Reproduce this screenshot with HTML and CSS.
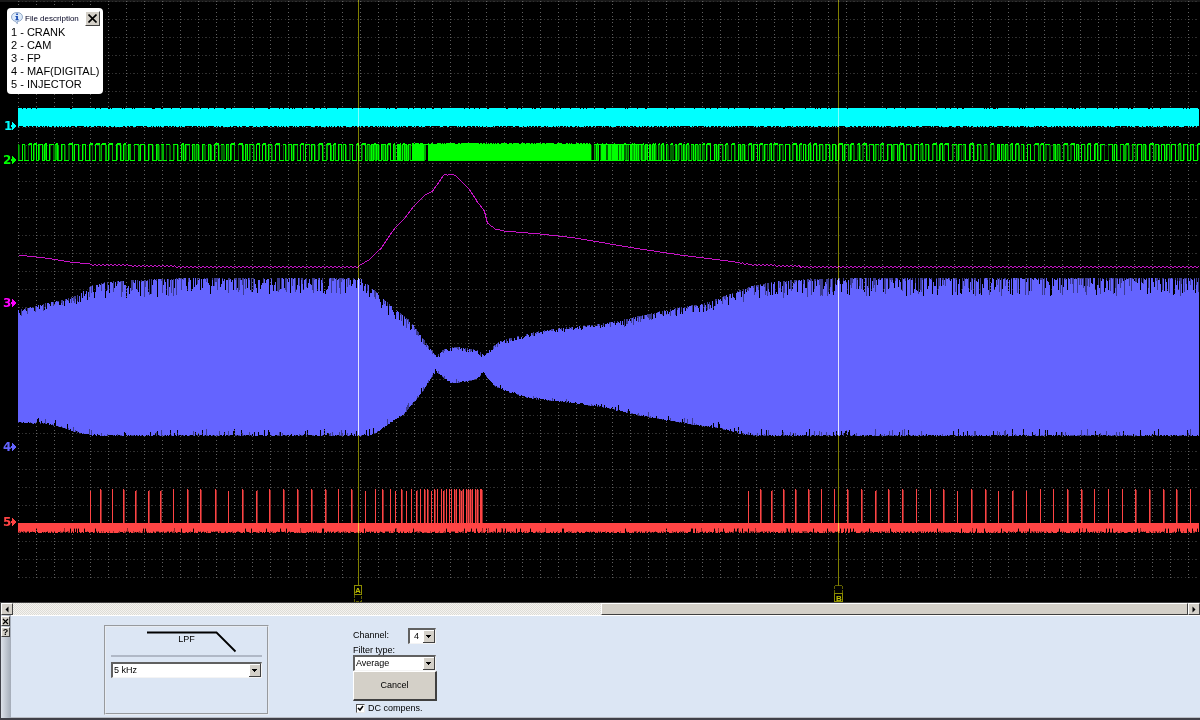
FILE: index.html
```html
<!DOCTYPE html>
<html lang="en">
<head>
<meta charset="utf-8">
<title>Oscilloscope</title>
<link rel="stylesheet" href="styles.css">
</head>
<body>
<main class="scope">
  <svg class="plot" viewBox="0 0 1200 602" preserveAspectRatio="none" role="img" aria-label="Recorded signals">
    <defs>
      <pattern id="grid" x="18" y="1" width="18" height="18" patternUnits="userSpaceOnUse">
        <path class="dots-h" d="M0 0h2v1H0zM4 0h1v1H4zM7 0h2v1H7zM11 0h1v1h-1zM15 0h1v1h-1z"/>
        <path class="dots-v" d="M0 0h1v1H0zM0 3h1v1H0zM0 7h1v1H0zM0 11h1v1H0zM0 15h1v1H0z"/>
      </pattern>
    </defs>
    <rect class="top-edge" x="0" y="0" width="1200" height="2"/>
    <rect x="18" y="1" width="1181" height="577" fill="url(#grid)"/>
    <g id="traces"></g>
    <g class="cursors">
      <rect class="cursor" x="358" y="0" width="1" height="586"/>
      <rect class="cursor" x="838" y="0" width="1" height="586"/>
      <rect class="flag" x="354.5" y="585.5" width="7" height="9" rx="1"/>
      <path class="flag dashed" d="M354.5 595v6.500h7V595"/>
      <rect class="flag" x="834.500" y="593.500" width="8" height="8" rx="1"/>
      <path class="flag dashed" d="M834.500 593v-7.500h8V593"/>
      <text class="flag-text" x="358" y="593">A</text>
      <text class="flag-text" x="839" y="601">B</text>
    </g>
    <g class="channels">
      <g class="ch1"><text x="4" y="130">1</text><path d="M11 125h1v-3h1v1h1v1h1v1h1v2h-1v1h-1v1h-1v1h-1v-3h-1z"/></g>
      <g class="ch2"><text x="3" y="164">2</text><path d="M11 159h1v-3h1v1h1v1h1v1h1v2h-1v1h-1v1h-1v1h-1v-3h-1z"/></g>
      <g class="ch3"><text x="3" y="307">3</text><path d="M11 302h1v-3h1v1h1v1h1v1h1v2h-1v1h-1v1h-1v1h-1v-3h-1z"/></g>
      <g class="ch4"><text x="3" y="451">4</text><path d="M11 446h1v-3h1v1h1v1h1v1h1v2h-1v1h-1v1h-1v1h-1v-3h-1z"/></g>
      <g class="ch5"><text x="3" y="526">5</text><path d="M11 521h1v-3h1v1h1v1h1v1h1v2h-1v1h-1v1h-1v1h-1v-3h-1z"/></g>
    </g>
  </svg>
  <aside class="description">
    <header class="description-head">
      <svg class="info" viewBox="0 0 12 12" aria-hidden="true">
        <path d="M6 .5C2.500.5.500 2.500.500 5c0 2.300 1.700 4 4 4.400L6.300 11.800V9.500C9.500 9.300 11.500 7.500 11.500 5 11.500 2.500 9.500.5 6 .5z" fill="#dceafa" stroke="#7f98bc" stroke-width=".8"/>
        <path d="M5.200 1.500h1.700V3H5.200zM4.500 4h2.400v3.300h.8v1H4.400v-1h.8V5h-.7z" fill="#1648b0"/>
      </svg>
      <span>File description</span>
      <button class="close" type="button" aria-label="Close description"><svg viewBox="0 0 9 9"><path d="M.5.5l8 8M8.500.5l-8 8" stroke="#000" stroke-width="1.600"/></svg></button>
    </header>
    <ul class="channel-list">
      <li>1 - CRANK</li>
      <li>2 - CAM</li>
      <li>3 - FP</li>
      <li>4 - MAF(DIGITAL)</li>
      <li>5 - INJECTOR</li>
    </ul>
  </aside>
</main>
<nav class="scrollbar" aria-label="Timeline">
  <button class="arrow" type="button" aria-label="Scroll left"><svg viewBox="0 0 6 7"><path d="M4.500.5v6l-3-3z"/></svg></button>
  <div class="track"><div class="thumb"></div></div>
  <button class="arrow" type="button" aria-label="Scroll right"><svg viewBox="0 0 6 7"><path d="M1.500.5v6l3-3z"/></svg></button>
</nav>
<form class="panel">
  <div class="grip">
    <button class="mini" type="button" aria-label="Close panel"><svg viewBox="0 0 7 7"><path d="M1 1l5 5M6 1L1 6" stroke="#000" stroke-width="1.200"/></svg></button>
    <button class="mini" type="button">?</button>
  </div>
  <fieldset class="lpf">
    <div class="curve">
      <svg viewBox="0 0 90 22" aria-hidden="true"><path d="M0 1.500h69.500L88.500 20.500" fill="none" stroke="#000" stroke-width="1.800"/></svg>
      <label for="cutoff">LPF</label>
    </div>
    <select id="cutoff" class="combo"><option>5 kHz</option></select>
  </fieldset>
  <div class="filter">
    <div class="row"><label for="channel">Channel:</label><select id="channel" class="combo small"><option>4</option></select></div>
    <label class="type-label" for="type">Filter type:</label>
    <select id="type" class="combo"><option>Average</option></select>
    <button class="cancel" type="button">Cancel</button>
    <label class="check"><input type="checkbox" checked><span>DC compens.</span></label>
  </div>
</form>
<script src="traces.js"></script>
</body>
</html>
```
FILE: styles.css
```css
* { box-sizing: border-box; }
body {
  margin: 0;
  min-height: 100vh;
  display: flex;
  flex-direction: column;
  background: #000;
  color: #000;
  font: 9px/11px "Liberation Sans", Arial, sans-serif;
}
button, select, input { font: inherit; color: inherit; margin: 0; }
button {
  display: flex;
  align-items: center;
  justify-content: center;
  padding: 0;
  background: #d4d0c8;
  border: 1px solid;
  border-color: #fff #404040 #404040 #fff;
}
.scope { position: relative; flex: 1; min-height: 300px; }
.plot { position: absolute; inset: 0; width: 100%; height: 100%; display: block; shape-rendering: crispEdges; }
.top-edge { fill: #181818; }
.dots-h { fill: #303030; }
.dots-v { fill: #606060; }
.cursors { mix-blend-mode: plus-lighter; }
.cursor { fill: #808000; }
.flag { fill: none; stroke: #8c8c00; stroke-width: 1; }
.dashed { stroke-dasharray: 3 1; stroke: #606000; }
.flag-text { font: bold 8px "Liberation Sans", Arial, sans-serif; fill: #c0c000; text-anchor: middle; }
.channels { font: bold 12px "DejaVu Sans", sans-serif; }
.ch1 { fill: #0ff; }
.ch2 { fill: #0f0; }
.ch3 { fill: #f0f; }
.ch4 { fill: #6464ff; }
.ch5 { fill: #ff4444; }
.line { fill: none; stroke-width: 1; }
.s2 { stroke: #0f0; }
.s2-mid { stroke: #00b000; }
.s2-dim { stroke: #006400; }
.s3 { stroke: #c814c8; }
.s4-dim { fill: #3c3c90; }
.s5-dim { fill: #902828; }

.description {
  position: absolute;
  left: 7px;
  top: 8px;
  width: 96px;
  padding: 2px 3px 3px 4px;
  background: #fff;
  border-radius: 4px;
}
.description-head { display: flex; align-items: center; gap: 2px; height: 16px; font-size: 8px; color: #000020; }
.info { width: 12px; height: 12px; }
.close { width: 15px; height: 15px; margin-left: auto; }
.close svg { width: 9px; height: 9px; }
.channel-list { margin: 0; padding: 0; list-style: none; font-size: 11px; line-height: 13px; white-space: nowrap; }

.scrollbar { display: flex; height: 13px; padding: 1px 0 0 1px; background: #404040; }
.arrow { width: 12px; height: 12px; }
.arrow svg { width: 6px; height: 7px; }
.track {
  flex: 1;
  display: flex;
  justify-content: flex-end;
  background: repeating-conic-gradient(#f4f3f0 0 25%, #dedcd6 0 50%) 0 0 / 2px 2px;
}
.thumb { width: 50%; background: #d4d0c8; border: 1px solid; border-color: #fff #404040 #404040 #fff; }

.panel {
  display: flex;
  height: 105px;
  background: #dce6f4;
  border: solid #404048;
  border-width: 0 0 2px 1px;
  box-shadow: inset 0 1px #fff, inset 0 -1px #b8bcc4;
}
.grip { width: 10px; padding-top: 1px; background: linear-gradient(90deg, #dde2ea, #a4acb8); }
.mini { width: 9px; height: 10px; margin-bottom: 1px; font-weight: bold; font-size: 9px; line-height: 8px; }
.mini svg { width: 7px; height: 7px; }
.lpf {
  width: 165px;
  height: 90px;
  margin: 10px 0 0 93px;
  padding: 4px 5px;
  border: 2px groove #e8ecf2;
  min-width: 0;
}
.curve { height: 26px; margin-bottom: 5px; border-bottom: 2px solid #b0b8c6; text-align: center; }
.curve svg { display: block; width: 90px; height: 22px; margin-left: 36px; }
.curve label { display: block; margin-top: -19px; }
.combo {
  display: block;
  width: 100%;
  height: 16px;
  padding: 0 1px;
  appearance: none;
  border: 2px solid;
  border-width: 2px 1px 1px 2px;
  border-color: #606060 #f4f4f4 #f4f4f4 #606060;
  border-radius: 0;
  background: #fff url("data:image/svg+xml,%3Csvg xmlns='http://www.w3.org/2000/svg' width='12' height='13' shape-rendering='crispEdges'%3E%3Cpath fill='%23404040' d='M0 0h12v13H0z'/%3E%3Cpath fill='%23fff' d='M0 0h11v12H0z'/%3E%3Cpath fill='%23d4d0c8' d='M1 1h10v11H1z'/%3E%3Cpath d='M3 5h5v1H3zM4 6h3v1H4zM5 7h1v1H5z'/%3E%3C/svg%3E") right 0 top 0 no-repeat;
}
.combo.small { width: 28px; padding-left: 4px; }
.filter { width: 84px; margin: 13px 0 0 84px; }
.row { display: flex; align-items: center; justify-content: space-between; height: 15px; padding-right: 1px; }
.type-label { display: block; height: 12px; line-height: 14px; }
.filter > .combo { width: 83px; }
.cancel { width: 84px; height: 30px; border-width: 1px 2px 2px 1px; }
.check { display: flex; align-items: center; gap: 3px; height: 14px; padding-left: 3px; }
.check input {
  appearance: none;
  width: 9px;
  height: 9px;
  border: 1px solid;
  border-color: #505050 #e8e8e8 #e8e8e8 #505050;
  background: #fff url("data:image/svg+xml,%3Csvg xmlns='http://www.w3.org/2000/svg' viewBox='0 0 7 7'%3E%3Cpath d='M1 3l2 2 3-4' fill='none' stroke='%23000' stroke-width='1.500'/%3E%3C/svg%3E") center / 7px 7px no-repeat;
}
```
FILE: traces.js
```javascript
const NS = "http://www.w3.org/2000/svg";
const traces = document.getElementById("traces");
const START = 18;
const END = 1199;

let seed = 7;
function rand() {
  seed = (seed * 1103515245 + 12345) % 2147483648;
  return seed / 2147483648;
}

function add(cls, d) {
  const p = document.createElementNS(NS, "path");
  p.setAttribute("class", cls);
  p.setAttribute("d", d);
  traces.appendChild(p);
}

function curve(points) {
  return x => {
    let i = 1;
    while (i < points.length - 1 && points[i][0] < x) i++;
    const [x0, y0] = points[i - 1];
    const [x1, y1] = points[i];
    return y0 + (y1 - y0) * (x - x0) / (x1 - x0);
  };
}

const bar = (x, top, bottom, w = 1) => `M${x} ${Math.round(top)}h${w}V${Math.round(bottom)}h${-w}z`;

function crank() {
  let d = "";
  for (let x = START; x < END; x++) {
    d += bar(x, rand() < 0.12 ? 109 : 108, rand() < 0.45 ? 127 : 126);
  }
  add("ch1", d);
}

function cam() {
  let bright = "", mid = "", dim = "";
  let x = START, high = false;
  while (x < END) {
    if (x > 410 && x < 590 && x !== 424) {
      bright += `M${x + .5} ${rand() < .3 ? 144 : 143}V161`;
      x++;
      continue;
    }
    const dense = x > 590 && x < 640;
    const medium = (x > 370 && x <= 410) || (x >= 640 && x < 700);
    const w = dense ? 1 + (rand() < .15) : medium ? 1 + Math.floor(rand() * 2.5) : 2 + Math.floor(rand() * 3);
    bright += `M${x} ${high ? 144 : 160}.5h${w + 1}`;
    if (high && rand() < .4) bright += `M${x + 1} 143.5h${w}`;
    const edge = `M${x + .5} 144V161`;
    const r = rand();
    if (r < .55) bright += edge;
    else if (r < .85) mid += edge;
    else dim += edge;
    if (rand() < .55) dim += `M${x + 1.5} 145V160`;
    else if (rand() < .3) mid += `M${x + 1.5} 145V160`;
    high = !high;
    x += w;
  }
  add("line s2-dim", dim);
  add("line s2-mid", mid);
  add("line s2", bright);
}

function pressure() {
  const f = curve([[18,255],[45,258],[70,262],[90,264],[130,265],[175,266],[358,266],[368,260],
    [380,249],[388,237],[396,226],[405,217],[414,205],[423,196],[432,191],[437,184],[444,174],
    [447,175],[451,174],[456,176],[468,188],[477,202],[484,211],[487,223],[491,226],[495,229],
    [504,231],[540,234],[575,238],[610,244],[640,249],[680,255],[720,260],[750,264],[800,266],
    [1199,266]]);
  let d = "";
  for (let x = START; x < END; x++) {
    const rippled = x >= 90 && (x <= 358 || x >= 740);
    const ripple = rippled && x % 4 < 2 ? 1 : 0;
    d += `${d ? "L" : "M"}${x + .5} ${Math.floor(f(x)) + ripple + .5}`;
  }
  add("line s3", d);
}

function maf() {
  const top = curve([[18,310],[30,307],[50,302],[62,300],[75,296],[90,286],[100,283],[115,281],
    [160,279],[190,278],[360,278],[370,286],[380,296],[390,305],[400,313],[410,321],[418,332],
    [428,346],[436,356],[442,350],[450,347],[460,347],[470,349],[478,350],[484,356],[490,348],
    [500,341],[520,335],[540,331],[560,328],[600,324],[630,318],[670,309],[705,303],[740,290],
    [755,285],[780,281],[810,279],[850,278],[1199,278]]);
  const bottom = curve([[18,423],[45,424],[60,427],[80,434],[95,436],[368,436],[378,432],
    [390,423],[403,415],[415,401],[425,388],[433,375],[436,372],[442,377],[450,383],[460,383],
    [475,380],[480,376],[483,372],[488,380],[495,387],[510,393],[530,399],[560,402],[600,407],
    [640,416],[680,423],[720,429],[745,435],[760,436],[1199,436]]);
  const noise = curve([[18,7],[70,7],[92,15],[120,18],[358,16],[375,13],[410,11],[430,4],[600,4],
    [625,8],[700,8],[740,13],[780,18],[1199,18]]);
  let d = "", dim = "";
  for (let x = START; x < END; x++) {
    const drop = rand() < .3 ? rand() * 2 : rand() * noise(x);
    const rise = rand() < .75 ? rand() * 1.5 : rand() * 7 * Math.min(1, noise(x) / 7);
    const y = top(x);
    const b = bottom(x);
    d += bar(x, y + drop, b - rise);
    if (rand() < .4) dim += bar(x, y, b);
  }
  add("s4-dim", dim);
  add("ch4", d);
}

function injector() {
  const pulses = [90,100,112,123,135,148,160,173,187,200,215,228,242,256,269,283,297,311,325,338,
    351,365,375,382,390,395,401,406,411,416,420,424,427,431,434,437,441,443,446,449,451,454,456,
    459,461,463,466,468,470,472,475,477,480,481,748,760,771,783,795,808,821,834,847,861,875,888,
    902,916,930,943,957,971,985,998,1012,1026,1040,1053,1067,1081,1094,1108,1122,1135,1149,1163,
    1176,1190];
  let d = "", dim = "";
  for (let x = START; x < END; x++) {
    const r = rand();
    d += bar(x, 523, r < .08 ? 528 : r < .35 ? 531 : r < .7 ? 532 : 533);
    dim += bar(x, 523, r < .06 ? 529 : rand() < .4 ? 533 : 532);
  }
  for (const x of pulses) {
    d += bar(x, rand() < .3 ? 491 : 489, 524);
    if (rand() < .6) dim += bar(x + 1, 490, 524);
  }
  add("s5-dim", dim);
  add("ch5", d);
}

crank();
cam();
pressure();
maf();
injector();
```
